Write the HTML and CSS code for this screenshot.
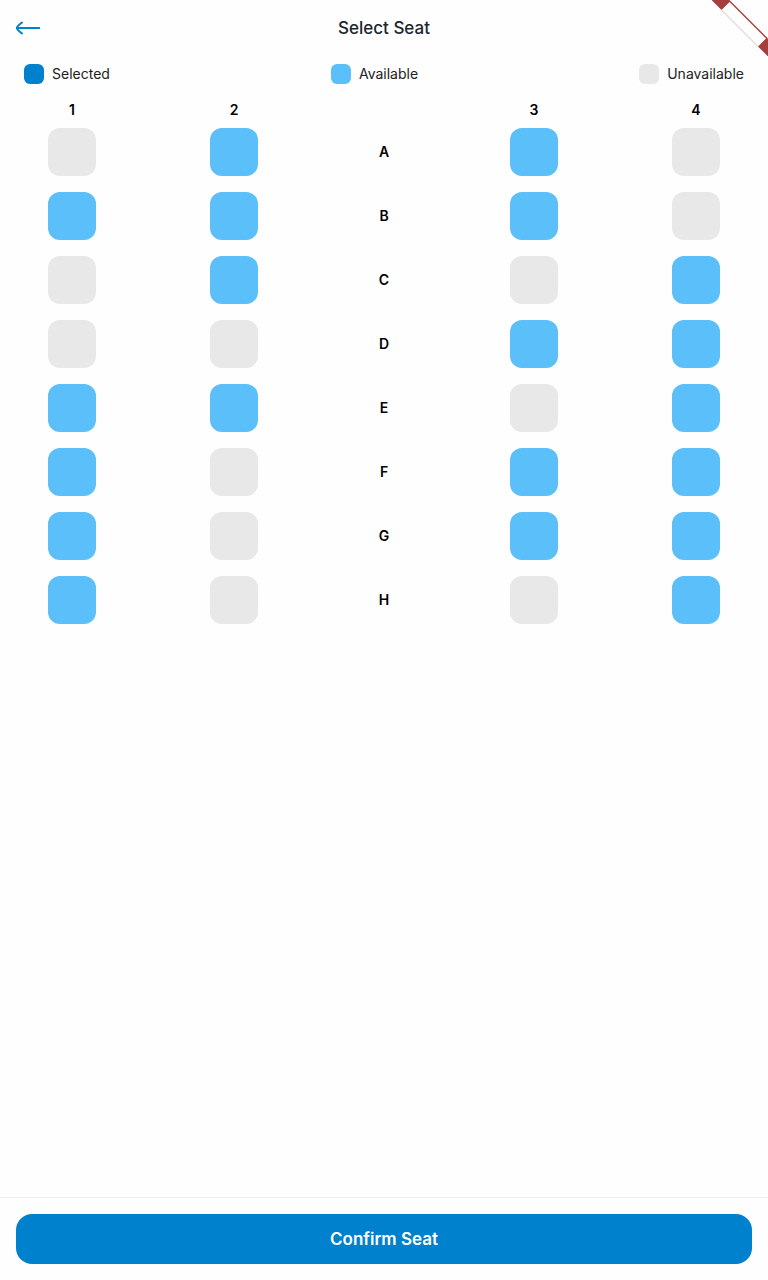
FILE: index.html
```html
<!DOCTYPE html>
<html lang="en">
<head>
<meta charset="utf-8">
<meta name="viewport" content="width=device-width, initial-scale=1">
<title>Select Seat</title>
<link rel="stylesheet" href="styles.css">
</head>
<body>
<svg class="ribbon" viewBox="0 0 56 56" aria-hidden="true">
  <path d="M-.5 0H16.500L18 1.500L9.500 10ZM54.500 38L46 46.500L56 56.500V39.500Z" fill="#a43f3e"/>
  <path d="M16.500 0L56 39.500" stroke="#a43f3e" stroke-width="1.400"/>
  <path d="M9.500 10L46 46.500" stroke="#ecd9da" stroke-width="1.200"/>
</svg>
<header class="topbar">
  <button class="back" type="button" aria-label="Back">
    <svg viewBox="0 0 24 24" aria-hidden="true"><path d="M23.200 12H1M6 6.500L3.500 8.500Q1 10.500 .8 12Q1 13.500 3.500 15.500L6 17.500"/></svg>
  </button>
  <h1 class="title">Select Seat</h1>
</header>
<ul class="legend">
  <li class="legend-item"><span class="swatch selected"></span>Selected</li>
  <li class="legend-item"><span class="swatch available"></span>Available</li>
  <li class="legend-item"><span class="swatch unavailable"></span>Unavailable</li>
</ul>
<main class="seats">
  <div class="numbers"><span class="number">1</span><span class="number">2</span><span class="letter"></span><span class="number">3</span><span class="number">4</span></div>
  <div class="row"><input class="seat" type="checkbox" aria-label="A1" disabled><input class="seat" type="checkbox" aria-label="A2"><span class="letter">A</span><input class="seat" type="checkbox" aria-label="A3"><input class="seat" type="checkbox" aria-label="A4" disabled></div>
  <div class="row"><input class="seat" type="checkbox" aria-label="B1"><input class="seat" type="checkbox" aria-label="B2"><span class="letter">B</span><input class="seat" type="checkbox" aria-label="B3"><input class="seat" type="checkbox" aria-label="B4" disabled></div>
  <div class="row"><input class="seat" type="checkbox" aria-label="C1" disabled><input class="seat" type="checkbox" aria-label="C2"><span class="letter">C</span><input class="seat" type="checkbox" aria-label="C3" disabled><input class="seat" type="checkbox" aria-label="C4"></div>
  <div class="row"><input class="seat" type="checkbox" aria-label="D1" disabled><input class="seat" type="checkbox" aria-label="D2" disabled><span class="letter">D</span><input class="seat" type="checkbox" aria-label="D3"><input class="seat" type="checkbox" aria-label="D4"></div>
  <div class="row"><input class="seat" type="checkbox" aria-label="E1"><input class="seat" type="checkbox" aria-label="E2"><span class="letter">E</span><input class="seat" type="checkbox" aria-label="E3" disabled><input class="seat" type="checkbox" aria-label="E4"></div>
  <div class="row"><input class="seat" type="checkbox" aria-label="F1"><input class="seat" type="checkbox" aria-label="F2" disabled><span class="letter">F</span><input class="seat" type="checkbox" aria-label="F3"><input class="seat" type="checkbox" aria-label="F4"></div>
  <div class="row"><input class="seat" type="checkbox" aria-label="G1"><input class="seat" type="checkbox" aria-label="G2" disabled><span class="letter">G</span><input class="seat" type="checkbox" aria-label="G3"><input class="seat" type="checkbox" aria-label="G4"></div>
  <div class="row"><input class="seat" type="checkbox" aria-label="H1"><input class="seat" type="checkbox" aria-label="H2" disabled><span class="letter">H</span><input class="seat" type="checkbox" aria-label="H3" disabled><input class="seat" type="checkbox" aria-label="H4"></div>
</main>
<footer class="footer">
  <button class="confirm" type="button">Confirm Seat</button>
</footer>
</body>
</html>
```
FILE: styles.css
```css
* {
  box-sizing: border-box;
}

body {
  margin: 0;
  min-height: 100vh;
  display: flex;
  flex-direction: column;
  background: #fefefe;
  color: #000;
  font-family: Inter, "Liberation Sans", sans-serif;
  font-size: 14px;
  line-height: 20px;
}

.ribbon {
  position: absolute;
  top: 0;
  right: 0;
  width: 56px;
  height: 56px;
  pointer-events: none;
}

.topbar {
  display: grid;
  grid-template-columns: 24px 1fr 24px;
  align-items: center;
  height: 56px;
  padding: 0 16px;
}

.back {
  width: 24px;
  height: 24px;
  padding: 0;
  border: 0;
  background: none;
}

.back svg {
  display: block;
  fill: none;
  stroke: #0081cd;
  stroke-width: 2;
  stroke-linecap: round;
  stroke-linejoin: round;
}

.title {
  margin: 0;
  text-align: center;
  color: #1b262e;
  font-size: 17px;
  font-weight: 500;
  line-height: 24px;
}

.legend {
  display: flex;
  justify-content: space-between;
  margin: 0;
  padding: 8px 24px;
  list-style: none;
}

.legend-item {
  display: flex;
  align-items: center;
  gap: 8px;
  color: #222;
}

.swatch {
  width: 20px;
  height: 20px;
  border-radius: 6px;
}

.selected {
  background: #0081cd;
}

.available {
  background: #5bbff9;
}

.unavailable {
  background: #e8e8e8;
}

.seats {
  flex: 1;
  display: flex;
  flex-direction: column;
  gap: 16px;
  padding: 8px 48px 16px;
  font-weight: 600;
}

.numbers,
.row {
  display: flex;
  align-items: center;
  justify-content: space-between;
}

.numbers {
  height: 20px;
  margin-bottom: -8px;
}

.number {
  width: 48px;
  text-align: center;
}

.letter {
  width: 24px;
  text-align: center;
}

.seat {
  appearance: none;
  width: 48px;
  height: 48px;
  margin: 0;
  border-radius: 12px;
  background: #5bbff9;
}

.seat:checked {
  background: #0081cd;
}

.seat:disabled {
  background: #e8e8e8;
}

.footer {
  padding: 16px;
  border-top: 1px solid #f1f1f1;
}

.confirm {
  display: block;
  width: 100%;
  height: 50px;
  border: 0;
  border-radius: 16px;
  background: #0081cd;
  color: #fff;
  font: 600 17px/24px Inter, "Liberation Sans", sans-serif;
}
```
